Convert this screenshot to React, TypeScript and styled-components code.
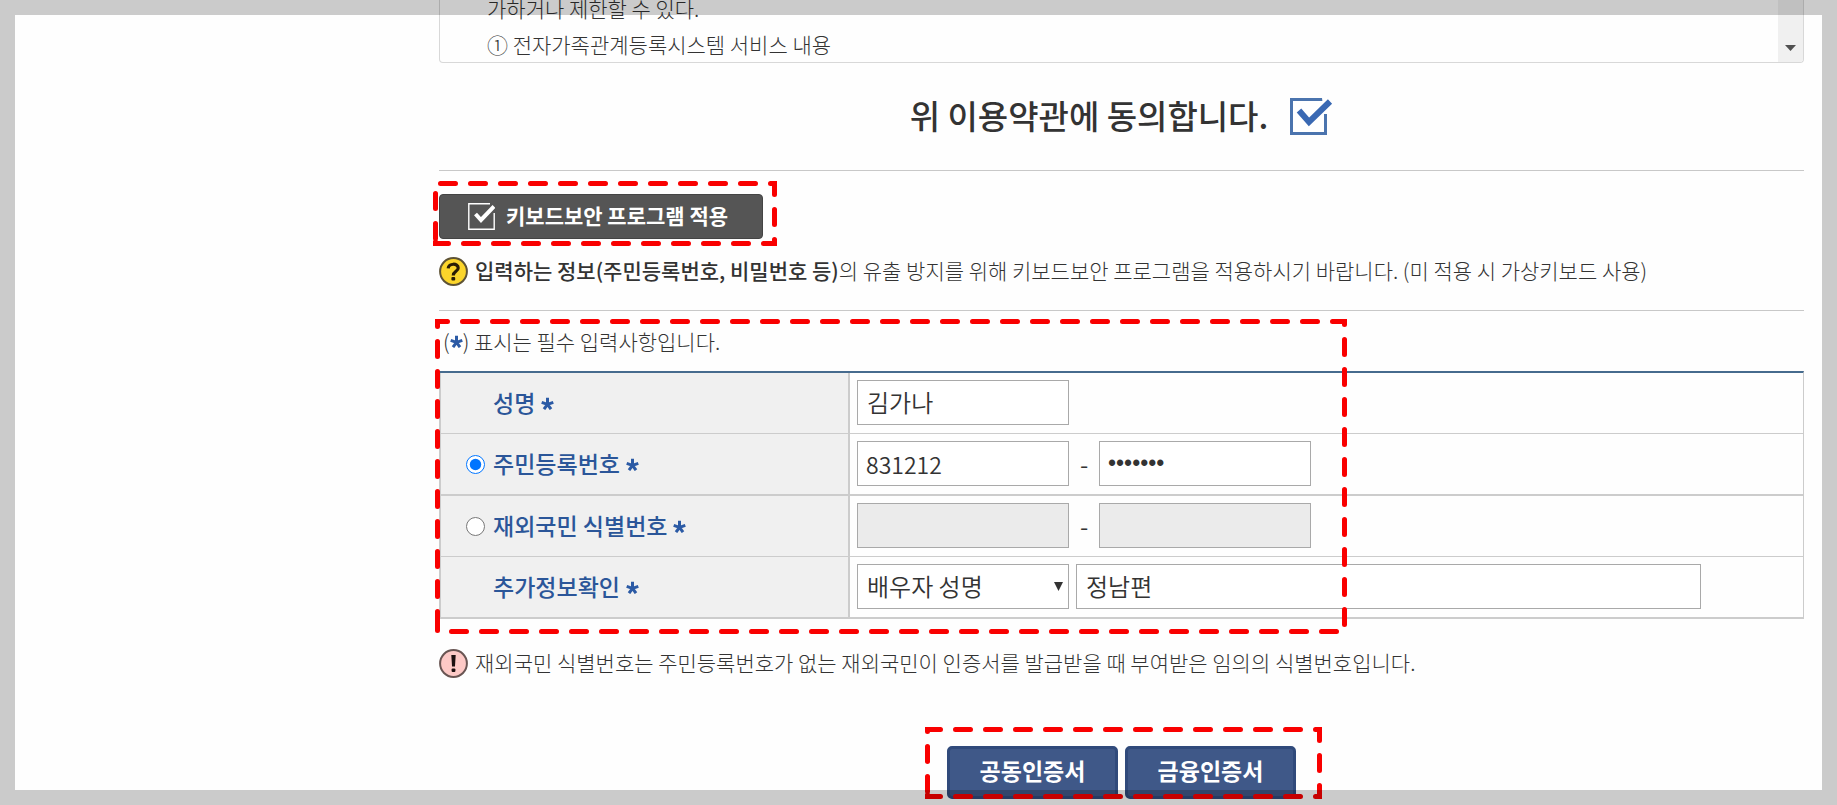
import React, { useState } from "react";
import styled, { createGlobalStyle } from "styled-components";

const GlobalStyle = createGlobalStyle`
  *, *::before, *::after { box-sizing: border-box; }
  body {
    margin: 0;
    background: #fefefe;
    color: #333;
    font-family: "Noto Sans CJK KR", "Noto Sans", sans-serif;
    font-size: 21px;
    font-weight: 300;
  }
  input, select, button { font: inherit; color: inherit; }
`;

const Page = styled.div`
  position: relative;
  min-height: 100vh;
  padding: 0 33px 6px 439px;
  overflow: hidden;
`;

const Frame = styled.div`
  position: absolute;
  inset: 0;
  z-index: 3;
  border: 15px solid rgba(0, 0, 0, 0.2);
  pointer-events: none;
`;

const TermsBox = styled.section`
  display: flex;
  height: 63px;
  border: 1px solid #d8d8d8;
  border-top: 0;
  border-radius: 0 0 4px 4px;
  overflow: hidden;
`;

const TermsText = styled.div`
  flex: 1;
  display: flex;
  flex-direction: column;
  justify-content: flex-end;
  padding-left: 47px;
`;

const TermsLine = styled.p`
  flex: none;
  margin: 0;
  line-height: 36px;
`;

const ScrollTrack = styled.div`
  display: flex;
  justify-content: center;
  align-items: flex-end;
  width: 25px;
  padding-bottom: 11px;
  background: #f0f0f0;
`;

const Agreement = styled.label`
  display: flex;
  align-items: center;
  justify-content: center;
  gap: 22px;
  height: 107px;
  font-size: 33px;
  font-weight: 500;
`;

const AgreementText = styled.span`
  padding-bottom: 4px;
`;

const CheckHolder = styled.span`
  position: relative;
  display: block;
  width: 43px;
  height: 37px;
`;

const CheckInput = styled.input`
  appearance: none;
  display: block;
  width: 37px;
  height: 37px;
  margin: 0;
  border: 3px solid #4b74ae;
  background: #fff;
`;

const CheckMark = styled.svg`
  position: absolute;
  top: 0;
  left: 0;
  pointer-events: none;
`;

const Section = styled.section`
  border-top: 1px solid #c8c8c8;
`;

const SecuritySection = styled(Section)`
  height: 140px;
  padding-top: 23px;
`;

const Marked = styled.div`
  position: relative;
  width: fit-content;
`;

const MarkerSvg = styled.svg`
  position: absolute;
  z-index: 2;
  pointer-events: none;
  overflow: visible;
`;

const SecurityButton = styled.button`
  display: flex;
  align-items: center;
  gap: 11px;
  width: 324px;
  height: 45px;
  padding: 0 0 0 28px;
  border: 1px solid #444;
  border-radius: 4px;
  background: #555;
  color: #fff;
  font-weight: 700;

  span { padding-bottom: 4px; }
`;

const Notice = styled.p`
  display: flex;
  align-items: center;
  gap: 7px;
  margin: 17px 0 0;
  line-height: 28px;

  svg { flex: none; }
  span { padding-bottom: 2px; }
  b { font-weight: 500; }
`;

const FormNotice = styled(Notice)`
  margin-top: 29px;
`;

const FormArea = styled.div`
  position: relative;
`;

const RequiredNote = styled.p`
  display: flex;
  align-items: center;
  height: 60px;
  margin: 0;
  padding-left: 4px;
`;

const FormTable = styled.table`
  width: 100%;
  border-collapse: separate;
  border-spacing: 0;
  border-top: 2px solid #466b8e;
  border-right: 1px solid #ccc;
  table-layout: fixed;
`;

const HeadCell = styled.th<{ $thick?: boolean }>`
  width: 411px;
  padding: 0 0 0 25px;
  border: solid #ccc;
  border-width: 0 2px ${(p) => (p.$thick ? 2 : 1)}px 2px;
  background: #f0f0f0;
  color: #2b5699;
  font-size: 23px;
  font-weight: 500;
  text-align: left;
`;

const DataCell = styled.td<{ $thick?: boolean }>`
  padding: 7px 7px 8px;
  border-bottom: ${(p) => (p.$thick ? 2 : 1)}px solid #ccc;
`;

const HeadContent = styled.div`
  display: flex;
  align-items: center;
  line-height: 28px;

  label { padding-bottom: 2px; }
  svg { margin-left: 6px; }
`;

const RadioSlot = styled.span`
  display: flex;
  width: 27px;
`;

const Radio = styled.input`
  width: 19px;
  height: 19px;
  margin: 0;
  accent-color: #0075ff;
`;

const Fields = styled.div`
  display: flex;
  align-items: center;
  font-size: 24px;
  font-weight: 350;
`;

const Field = styled.input`
  width: 212px;
  height: 45px;
  padding: 0 9px 2px;
  border: 1px solid #a9a9a9;
  border-radius: 0;
  background: #fff;
  outline: none;

  &:disabled { background: #ebebeb; }
`;

const NumberField = styled(Field)`
  padding: 0 8px;
  font-size: 23px;

  &[type="password"] { font-family: "Liberation Sans", sans-serif; }
`;

const WideField = styled(Field)`
  flex: 0 1 625px;
  margin-left: 7px;
`;

const Dash = styled.span`
  width: 30px;
  text-align: center;
`;

const SelectHolder = styled.span`
  position: relative;
  display: block;
`;

const Select = styled.select`
  appearance: none;
  display: block;
  width: 212px;
  height: 45px;
  padding: 0 24px 2px 9px;
  border: 1px solid #a9a9a9;
  border-radius: 0;
  background: #fff;
  outline: none;
`;

const SelectArrow = styled.svg`
  position: absolute;
  top: 18px;
  right: 6px;
  pointer-events: none;
`;

const Actions = styled(Marked)`
  display: flex;
  gap: 7px;
  margin: 68px auto 0;
`;

const CertButton = styled.button`
  width: 171px;
  height: 53px;
  padding: 0 0 6px;
  border: 3px solid #304a7b;
  border-radius: 5px;
  background: #3f5888;
  color: #fff;
  font-size: 23px;
  font-weight: 700;
`;

type MarkerProps = { top: number; left: number; width: number; height: number };

/* Red dashed highlight; the dash pattern starts just above the bottom-left corner. */
function Marker({ top, left, width, height }: MarkerProps) {
  return (
    <MarkerSvg style={{ top, left }} width={width} height={height} aria-hidden="true">
      <path
        d={`M2.5 ${height - 7.5}V2.5H${width - 2.5}V${height - 2.5}H2.5V${height - 7.5}`}
        fill="none"
        stroke="#f90000"
        strokeWidth="5"
        strokeLinecap="round"
        strokeDasharray="15 15"
      />
    </MarkerSvg>
  );
}

function Star() {
  return (
    <svg width="13" height="13" viewBox="0 0 13 13" role="img" aria-label="필수">
      <path
        d="M6.5 7.3V.7M6.5 7.3L.7 5.3M6.5 7.3L12.3 5.3M6.5 7.3L3 12.2M6.5 7.3L10 12.2"
        stroke="#2b5aa5"
        strokeWidth="3"
      />
    </svg>
  );
}

function QuestionIcon() {
  return (
    <svg width="29" height="29" viewBox="0 0 29 29" aria-hidden="true">
      <circle cx="14.5" cy="14.5" r="13.4" fill="#fbd52b" stroke="#5e5335" strokeWidth="2" />
      <path
        d="M9.2 11.4C9.4 6 19.2 5.8 19.2 11C19.2 14.4 14.3 14.2 14.3 18.4"
        fill="none"
        stroke="#2a1c05"
        strokeWidth="3.2"
      />
      <rect x="12.4" y="20" width="3.8" height="3.6" rx="1" fill="#2a1c05" />
    </svg>
  );
}

function AlertIcon() {
  return (
    <svg width="29" height="29" viewBox="0 0 29 29" aria-hidden="true">
      <circle cx="14.5" cy="14.5" r="13.4" fill="#fdc9c6" stroke="#695553" strokeWidth="2" />
      <path d="M12.3 6H16.7L16 17.6H13Z" fill="#1c0f0f" />
      <rect x="12.6" y="19.4" width="3.8" height="3.6" rx="1" fill="#1c0f0f" />
    </svg>
  );
}

type RowProps = {
  label: string;
  htmlFor: string;
  thick?: boolean;
  radio?: React.ReactNode;
  children: React.ReactNode;
};

function FormRow({ label, htmlFor, thick, radio, children }: RowProps) {
  return (
    <tr>
      <HeadCell $thick={thick} scope="row">
        <HeadContent>
          <RadioSlot>{radio}</RadioSlot>
          <label htmlFor={htmlFor}>{label}</label>
          <Star />
        </HeadContent>
      </HeadCell>
      <DataCell $thick={thick}>
        <Fields>{children}</Fields>
      </DataCell>
    </tr>
  );
}

export default function App() {
  const [agreed, setAgreed] = useState(true);
  const [idType, setIdType] = useState("resident");
  const overseas = idType === "overseas";

  return (
    <>
      <GlobalStyle />
      <Page>
        <TermsBox>
          <TermsText>
            <TermsLine>가하거나 제한할 수 있다.</TermsLine>
            <TermsLine>① 전자가족관계등록시스템 서비스 내용</TermsLine>
          </TermsText>
          <ScrollTrack>
            <svg width="11" height="6" viewBox="0 0 11 6" aria-hidden="true">
              <path d="M0 0H11L5.5 6Z" fill="#505050" />
            </svg>
          </ScrollTrack>
        </TermsBox>

        <Agreement>
          <AgreementText>위 이용약관에 동의합니다.</AgreementText>
          <CheckHolder>
            <CheckInput
              type="checkbox"
              checked={agreed}
              onChange={(e) => setAgreed(e.target.checked)}
            />
            {agreed && (
              <CheckMark width="43" height="37" viewBox="0 0 43 37" aria-hidden="true">
                <path d="M32 0H38V16H34Z" fill="#fefefe" />
                <path d="M9 12L19 23L40 3" fill="none" stroke="#fff" strokeWidth="10" />
                <path d="M9 12.5L19 24L40 3.5" fill="none" stroke="#3a69b3" strokeWidth="6" />
              </CheckMark>
            )}
          </CheckHolder>
        </Agreement>

        <SecuritySection>
          <Marked>
            <SecurityButton type="button">
              <svg width="27" height="27" viewBox="0 0 27 27" aria-hidden="true">
                <path d="M22 .8H.8V26.2H26.2V10" fill="none" stroke="#fff" strokeWidth="1.4" />
                <path d="M7.5 11L13 17L26 3.5" fill="none" stroke="#fff" strokeWidth="4" />
              </svg>
              <span>키보드보안 프로그램 적용</span>
            </SecurityButton>
            <Marker top={-13} left={-6} width={344} height={65} />
          </Marked>
          <Notice>
            <QuestionIcon />
            <span>
              <b>입력하는 정보(주민등록번호, 비밀번호 등)</b>의 유출 방지를 위해 키보드보안
              프로그램을 적용하시기 바랍니다. (미 적용 시 가상키보드 사용)
            </span>
          </Notice>
        </SecuritySection>

        <Section>
          <FormArea>
            <RequiredNote>
              (<Star />) 표시는 필수 입력사항입니다.
            </RequiredNote>
            <FormTable>
              <tbody>
                <FormRow label="성명" htmlFor="name">
                  <Field id="name" defaultValue="김가나" />
                </FormRow>
                <FormRow
                  label="주민등록번호"
                  htmlFor="resident"
                  thick
                  radio={
                    <Radio
                      id="resident"
                      type="radio"
                      name="idType"
                      checked={!overseas}
                      onChange={() => setIdType("resident")}
                    />
                  }
                >
                  <NumberField
                    aria-label="주민등록번호 앞자리"
                    defaultValue="831212"
                    disabled={overseas}
                  />
                  <Dash>-</Dash>
                  <NumberField
                    aria-label="주민등록번호 뒷자리"
                    type="password"
                    defaultValue="1234567"
                    disabled={overseas}
                  />
                </FormRow>
                <FormRow
                  label="재외국민 식별번호"
                  htmlFor="overseas"
                  radio={
                    <Radio
                      id="overseas"
                      type="radio"
                      name="idType"
                      checked={overseas}
                      onChange={() => setIdType("overseas")}
                    />
                  }
                >
                  <NumberField aria-label="식별번호 앞자리" disabled={!overseas} />
                  <Dash>-</Dash>
                  <NumberField
                    aria-label="식별번호 뒷자리"
                    type="password"
                    disabled={!overseas}
                  />
                </FormRow>
                <FormRow label="추가정보확인" htmlFor="extra" thick>
                  <SelectHolder>
                    <Select id="extra" defaultValue="spouse">
                      <option value="spouse">배우자 성명</option>
                    </Select>
                    <SelectArrow width="9" height="9" viewBox="0 0 9 9" aria-hidden="true">
                      <path d="M0 0H9L4.5 9Z" fill="#333" />
                    </SelectArrow>
                  </SelectHolder>
                  <WideField aria-label="추가정보 성명" defaultValue="정남편" />
                </FormRow>
              </tbody>
            </FormTable>
            <Marker top={8} left={-4} width={912} height={315} />
          </FormArea>
          <FormNotice>
            <AlertIcon />
            <span>
              재외국민 식별번호는 주민등록번호가 없는 재외국민이 인증서를 발급받을 때 부여받은
              임의의 식별번호입니다.
            </span>
          </FormNotice>
        </Section>

        <Actions>
          <CertButton type="button">공동인증서</CertButton>
          <CertButton type="button">금융인증서</CertButton>
          <Marker top={-19} left={-22} width={397} height={72} />
        </Actions>
        <Frame />
      </Page>
    </>
  );
}
